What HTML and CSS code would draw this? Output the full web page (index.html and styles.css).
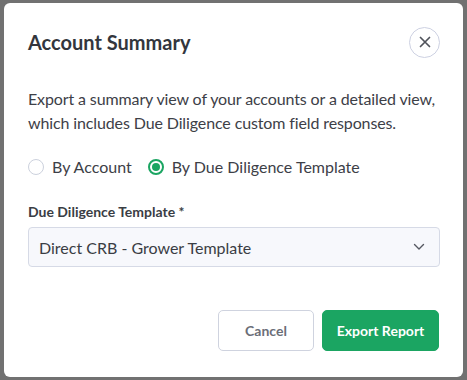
FILE: index.html
```html
<!DOCTYPE html>
<html lang="en">
<head>
<meta charset="utf-8">
<title>Account Summary</title>
<link rel="stylesheet" href="styles.css">
</head>
<body>
<div class="backdrop">
  <div class="modal">
    <div class="modal-header">
      <h2 class="modal-title">Account Summary</h2>
      <button class="close-btn" aria-label="Close">
        <svg width="14" height="14" viewBox="0 0 14 14"><path d="M2.5 2.5 L11.5 11.5 M11.5 2.5 L2.5 11.5" stroke="#50535b" stroke-width="1.7" stroke-linecap="round" fill="none"/></svg>
      </button>
    </div>
    <p class="desc">Export a summary view of your accounts or a detailed view, which includes Due Diligence custom field responses.</p>
    <div class="radios">
      <label class="radio"><span class="radio-dot"></span>By Account</label>
      <label class="radio"><span class="radio-dot checked"></span>By Due Diligence Template</label>
    </div>
    <div class="field-label">Due Diligence Template *</div>
    <div class="select">
      <span>Direct CRB - Grower Template</span>
      <svg width="12" height="8" viewBox="0 0 12 8"><path d="M1.5 1.5 L6 6 L10.5 1.5" stroke="#555861" stroke-width="1.4" fill="none" stroke-linecap="round" stroke-linejoin="round"/></svg>
    </div>
    <div class="actions">
      <button class="btn btn-cancel">Cancel</button>
      <button class="btn btn-primary">Export Report</button>
    </div>
  </div>
</div>
</body>
</html>
```

FILE: styles.css
```css
html, body {
  margin: 0;
  padding: 0;
}
body {
  background: #717171;
  font-family: Lato, "Open Sans", sans-serif;
  width: 467px;
  height: 380px;
  overflow: hidden;
}
.backdrop {
  padding: 3px 4px 0 4px;
}
.modal {
  width: 459px;
  height: 374px;
  box-sizing: border-box;
  background: #ffffff;
  border-radius: 6px;
  padding: 23px 23px 0 24px;
}
.modal-header {
  display: flex;
  align-items: center;
  justify-content: space-between;
  height: 32px;
}
.modal-title {
  margin: 0;
  font-size: 20px;
  font-weight: 700;
  color: #33363d;
  line-height: 32px;
}
.close-btn {
  width: 31px;
  height: 31px;
  border-radius: 50%;
  border: 1px solid #cdd1e2;
  background: #fff;
  padding: 0;
  display: flex;
  align-items: center;
  justify-content: center;
  margin-right: 0;
}
.desc {
  margin: 29px 0 0 0;
  font-size: 16px;
  letter-spacing: -0.12px;
  line-height: 24px;
  color: #3d4047;
}
.radios {
  display: flex;
  gap: 16px;
  margin-top: 20px;
  height: 24px;
}
.radio {
  display: flex;
  align-items: center;
  gap: 8px;
  font-size: 16px;
  color: #3d4047;
  line-height: 24px;
}
.radio-dot {
  width: 16px;
  height: 16px;
  box-sizing: border-box;
  border-radius: 50%;
  border: 1.5px solid #ccd1dd;
  display: flex;
  align-items: center;
  justify-content: center;
}
.radio-dot.checked {
  border: 2px solid #1ba562;
}
.radio-dot.checked::after {
  content: "";
  width: 8px;
  height: 8px;
  border-radius: 50%;
  background: #1ba562;
}
.field-label {
  margin-top: 23px;
  font-size: 14px;
  font-weight: 700;
  line-height: 20px;
  color: #3a3d44;
}
.select {
  margin-top: 5px;
  height: 40px;
  box-sizing: border-box;
  border: 1px solid #d6dae6;
  border-radius: 4px;
  background: #f7f8fc;
  display: flex;
  align-items: center;
  justify-content: space-between;
  padding: 0 14px 0 10px;
  font-size: 16px;
  color: #3a3d44;
}
.actions {
  display: flex;
  justify-content: flex-end;
  gap: 8px;
  margin-top: 43px;
  padding-right: 1px;
}
.btn {
  height: 41px;
  border-radius: 5px;
  font-family: Lato, "Open Sans", sans-serif;
  font-size: 14px;
  font-weight: 700;
  padding: 0;
}
.btn-cancel {
  width: 96px;
  background: #ffffff;
  border: 1px solid #cfd3df;
  color: #6b6e78;
}
.btn-primary {
  width: 117px;
  background: #1ba562;
  border: 1px solid #1ba562;
  color: #ffffff;
}
```
